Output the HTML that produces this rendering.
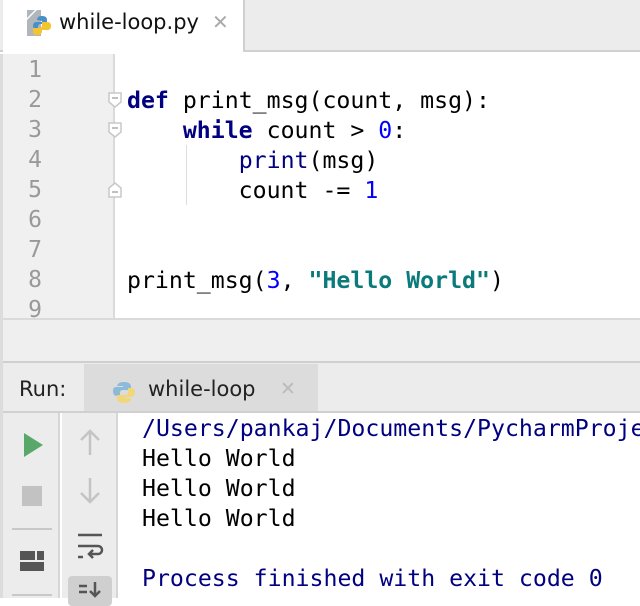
<!DOCTYPE html><html><head><style>
*{margin:0;padding:0;box-sizing:border-box}
body{width:640px;height:598px;overflow:hidden;background:#fff;position:relative;font-family:"DejaVu Sans Mono",monospace}
.a{position:absolute}
.code{font-size:23.2px;line-height:30px;white-space:pre;color:#000}
.ln{color:#999;font-size:23px;line-height:30px;width:40px;text-align:right;left:0}
.k{color:#000080;font-weight:bold}.n{color:#0000ff}.b{color:#000080}.s{font-weight:bold;color:#0a7a7a}
.ui{font-family:"DejaVu Sans",sans-serif}
.fold{position:absolute;left:108px;width:14px;height:16px}
</style></head><body>
<div class="a" style="left:0;top:0;width:640px;height:52px;background:#ececec;border-bottom:2px solid #d0d0d0"></div>
<div class="a" style="left:3px;top:0;width:242px;height:52px;background:#fff;border-right:2px solid #d0d0d0"></div>
<svg class="a" style="left:25px;top:8px" width="28" height="30" viewBox="0 0 28 30"><path d="M2 2h8l-8 8z" fill="#b0b6bb"/><path d="M2 12l10-10h4v26H2z" fill="#b0b6bb"/><path d="M12 12c0-3 2-4 5-4s5 1 5 4v4h-6c-2 0-3 1-3 3v3h-2c-2 0-3-2-3-4s1-4 3-4h6v-1z" fill="#4a90c8"/><path d="M22 14h1c2 0 3 2 3 4s-1 4-3 4h-6v1c0 3-2 4-5 4s-4-1-4-4v-3h6c2 0 3-1 3-3v-3z" fill="#f4c430"/></svg>
<div class="a ui" style="left:59px;top:10px;font-size:21px;color:#111">while-loop.py</div>
<div class="a ui" style="left:212px;top:10px;font-size:20px;color:#aaa">✕</div>
<div class="a" style="left:0;top:54px;width:3px;height:544px;background:#dcdcdc"></div>
<div class="a" style="left:3px;top:54px;width:112px;height:264px;background:#f0f0f0;border-right:2px solid #dadada"></div>
<div class="a code ln" style="top:55px;width:42px">1
2
3
4
5
6
7
8
9</div>
<svg class="fold" style="top:92px" viewBox="0 0 14 16"><path d="M1 1h12v9l-6 5-6-5z" fill="#fff" stroke="#c8c8c8" stroke-width="1.5"/><path d="M4 6h6" stroke="#aaa" stroke-width="1.5"/></svg>
<svg class="fold" style="top:122px" viewBox="0 0 14 16"><path d="M1 1h12v9l-6 5-6-5z" fill="#fff" stroke="#c8c8c8" stroke-width="1.5"/><path d="M4 6h6" stroke="#aaa" stroke-width="1.5"/></svg>
<svg class="fold" style="top:182px" viewBox="0 0 14 16"><path d="M1 15h12V6L7 1 1 6z" fill="#fff" stroke="#c8c8c8" stroke-width="1.5"/><path d="M4 10h6" stroke="#aaa" stroke-width="1.5"/></svg>
<div class="a" style="left:186px;top:145px;width:1px;height:60px;background:#ddd"></div>
<div class="a code" style="left:127px;top:56px">
<span class="k">def</span> print_msg(count, msg):
    <span class="k">while</span> count &gt; <span class="n">0</span>:
        <span class="b">print</span>(msg)
        count -= <span class="n">1</span>


print_msg(<span class="n">3</span>, <span class="s">"Hello World"</span>)</div>
<div class="a" style="left:3px;top:318px;width:637px;height:45px;background:#efefef;border-top:2px solid #dadada;border-bottom:2px solid #cfcfcf"></div>
<div class="a" style="left:3px;top:363px;width:637px;height:50px;background:#ececec;border-bottom:2px solid #d0d0d0"></div>
<div class="a ui" style="left:19px;top:377px;font-size:21px;color:#222">Run:</div>
<div class="a" style="left:84px;top:364px;width:234px;height:47px;background:#dcdcdc"></div>
<svg class="a" style="left:110px;top:375px" width="28" height="28" viewBox="0 0 28 28"><path d="M7 12c0-3 2-5 7-5s7 2 7 5v3h-8c-2 0-3 1-3 3v3H7c-3 0-4-2-4-5s1-4 4-4h6v-1H7z" fill="#8bbbd9"/><path d="M21 13c3 0 4 2 4 4s-1 5-4 5h-6v1h6c0 3-2 5-7 5s-7-2-7-5v-3h8c2 0 3-1 3-3v-4z" fill="#f2d77a"/></svg>
<div class="a ui" style="left:148px;top:377px;font-size:21px;color:#222">while-loop</div>
<div class="a ui" style="left:280px;top:378px;font-size:19px;color:#bbb">✕</div>
<div class="a" style="left:3px;top:413px;width:57px;height:185px;background:#ececec;border-right:2px solid #d6d6d6"></div>
<div class="a" style="left:62px;top:413px;width:56px;height:185px;background:#ececec;border-right:2px solid #d6d6d6"></div>
<svg class="a" style="left:23px;top:432px" width="22" height="26"><path d="M1 1L20 13L1 25z" fill="#59a869"/></svg>
<div class="a" style="left:22px;top:486px;width:20px;height:20px;background:#c2c2c2"></div>
<div class="a" style="left:12px;top:528px;width:40px;height:1.5px;background:#c8c8c8"></div>
<svg class="a" style="left:20px;top:551px" width="25" height="22"><rect x="0" y="0" width="15" height="9" fill="#555"/><rect x="17" y="0" width="7" height="9" fill="#555"/><rect x="0" y="11" width="24" height="9" fill="#555"/></svg>
<div class="a" style="left:12px;top:594px;width:40px;height:1.5px;background:#c8c8c8"></div>
<svg class="a" style="left:78px;top:428px" width="26" height="80" fill="none" stroke="#c4c4c4" stroke-width="2.5"><path d="M12 3v24M3 12l9-9 9 9"/><path d="M12 50v24M3 65l9 9 9-9"/></svg>
<svg class="a" style="left:76px;top:532px" width="30" height="30" fill="none" stroke="#555" stroke-width="2.5"><path d="M2 3h24M2 14h20a4 4 0 0 1 0 8h-8M17 18l-4 4 4 4M2 25h5"/></svg>
<div class="a" style="left:68px;top:576px;width:44px;height:30px;background:#cfcfcf;border-radius:4px"></div>
<svg class="a" style="left:78px;top:582px" width="26" height="16" fill="none" stroke="#555" stroke-width="2.5"><path d="M1 4h8M1 10h8M17 0v14M12 9l5 5 5-5"/></svg>
<div class="a" style="left:120px;top:413px;width:520px;height:185px;overflow:hidden">
<div class="a code" style="left:22px;top:1px"><span class="b">/Users/pankaj/Documents/PycharmProjects</span>
Hello World
Hello World
Hello World

<span class="b">Process finished with exit code 0</span></div></div>
</body></html>
